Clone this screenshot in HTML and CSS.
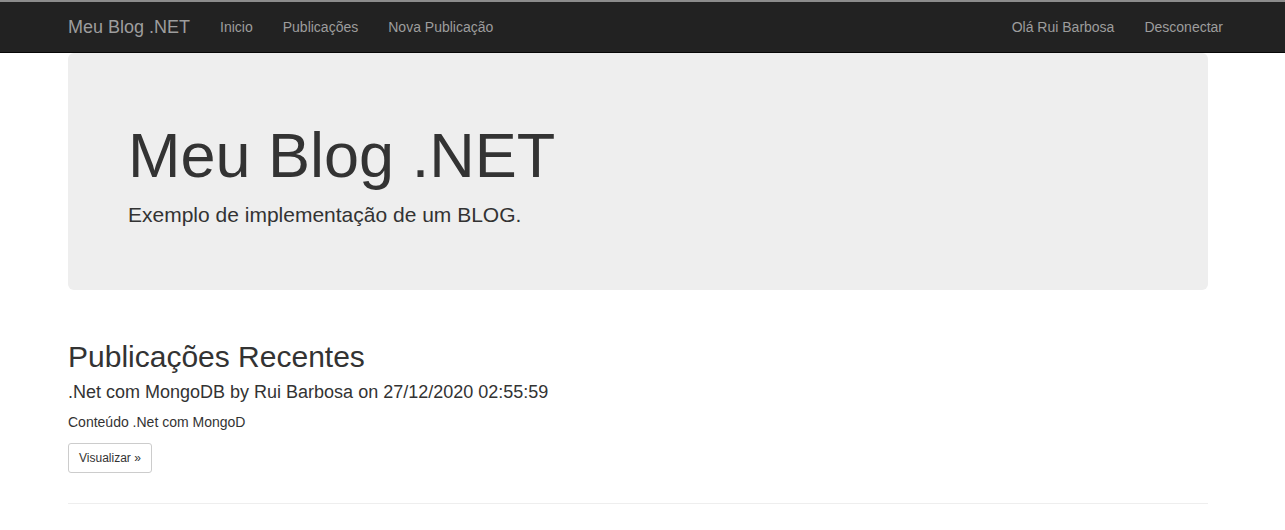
FILE: index.html
```html
<!DOCTYPE html>
<html lang="pt">
<head>
<meta charset="utf-8">
<title>Meu Blog .NET</title>
<link rel="stylesheet" href="styles.css">
</head>
<body>
<div class="topline"></div>
<nav class="navbar">
  <div class="container nav-inner">
    <div class="nav-left">
      <a class="brand" href="#">Meu Blog .NET</a>
      <a class="nav-link" href="#">Inicio</a>
      <a class="nav-link" href="#">Publicações</a>
      <a class="nav-link" href="#">Nova Publicação</a>
    </div>
    <div class="nav-right">
      <a class="nav-link" href="#">Olá Rui Barbosa</a>
      <a class="nav-link" href="#">Desconectar</a>
    </div>
  </div>
</nav>
<main class="container">
  <div class="jumbotron">
    <h1>Meu Blog .NET</h1>
    <p>Exemplo de implementação de um BLOG.</p>
  </div>
  <h2>Publicações Recentes</h2>
  <div class="post">
    <h3>.Net com MongoDB by Rui Barbosa on 27/12/2020 02:55:59</h3>
    <p>Conteúdo .Net com MongoD</p>
    <a class="btn" href="#">Visualizar »</a>
    <hr>
  </div>
</main>
</body>
</html>
```
FILE: styles.css
```css
* { box-sizing: border-box; }
html, body { margin: 0; padding: 0; }
body {
  font-family: "Liberation Sans", Arial, sans-serif;
  font-size: 14px;
  line-height: 1.42857;
  color: #333;
  background: #fff;
}
a { text-decoration: none; }
.topline { height: 2px; background: #8c8c8c; }
.container { width: 1140px; margin-left: 68px; }
.navbar {
  background: #222;
  border-bottom: 1px solid #080808;
  height: 51px;
}
.nav-inner { display: flex; justify-content: space-between; height: 50px; }
.nav-left, .nav-right { display: flex; }
.nav-left { margin-left: -15px; }
.nav-right { margin-right: -30px; }
.brand {
  color: #9d9d9d;
  font-size: 18px;
  line-height: 20px;
  padding: 15px;
  height: 50px;
}
.nav-link {
  color: #9d9d9d;
  font-size: 14px;
  line-height: 20px;
  padding: 15px;
}
.jumbotron {
  background: #eee;
  border-radius: 6px;
  padding: 48px 60px;
  margin-bottom: 50px;
}
h1 {
  font-size: 63px;
  font-weight: 500;
  line-height: 1.1;
  margin: 20px 0 10px;
}
.jumbotron p {
  font-size: 21px;
  font-weight: 200;
  margin: 0 0 12px;
}
h2 {
  font-size: 30px;
  font-weight: 500;
  line-height: 1.1;
  margin: 20px 0 10px;
}
h3 {
  font-size: 18px;
  font-weight: 500;
  line-height: 1.1;
  margin: 0 0 10px;
}
.post p { margin: 0 0 10px; }
.btn {
  display: inline-block;
  font-size: 12px;
  line-height: 1.5;
  padding: 5px 10px;
  color: #333;
  background: #fff;
  border: 1px solid #ccc;
  border-radius: 3px;
}
hr {
  border: 0;
  border-top: 1px solid #eee;
  margin: 30px 0 20px;
}
```
